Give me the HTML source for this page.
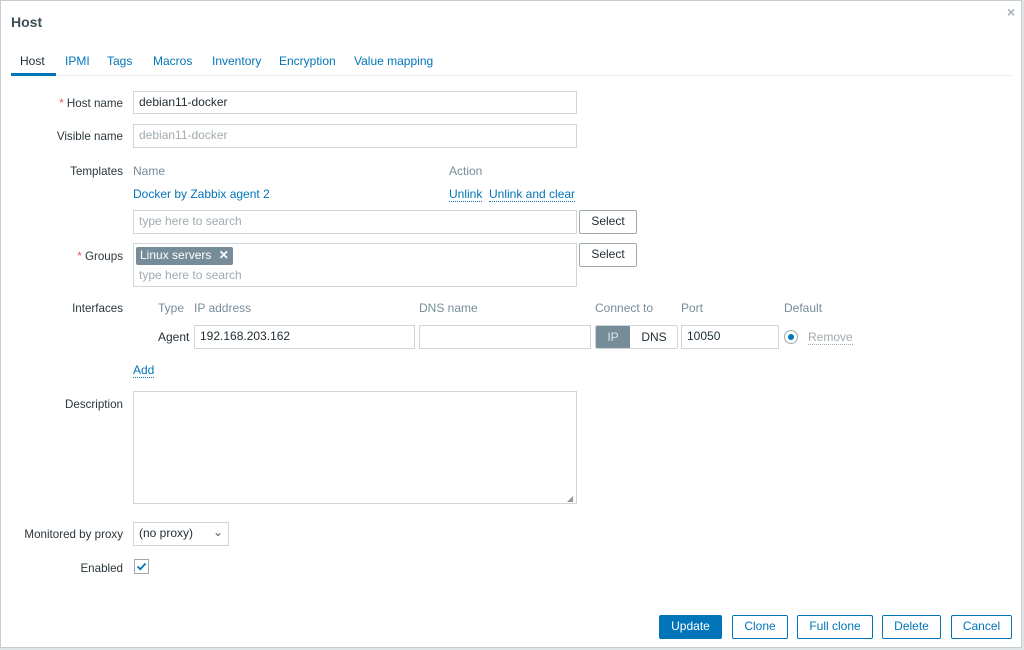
<!DOCTYPE html>
<html><head><meta charset="utf-8"><style>
*{box-sizing:border-box;margin:0;padding:0}
body{width:1024px;height:650px;background:#dfe4e7;font-family:"Liberation Sans",Arial,sans-serif;font-size:12px;color:#1f2c33;position:relative;overflow:hidden}
.dlg{position:absolute;left:0;top:0;width:1022px;height:648px;background:#fff;border:1px solid #c4ccd1}
.a{position:absolute;white-space:nowrap}
.lbl{position:absolute;right:898px;text-align:right;white-space:nowrap;font-size:11.6px;color:#2a363d;margin-top:1px}
.in{position:absolute;border:1px solid #cfd5d8;background:#fff;padding-left:5px;line-height:20px;white-space:nowrap}
.ph{color:#a1abb0}
.lnk{color:#0275b8}
.ul{border-bottom:1px dotted #0275b8}
.btn{position:absolute;border:1px solid #0275b8;color:#0275b8;background:#fff;text-align:center;line-height:20px;border-radius:2px}
.sel{position:absolute;border:1px solid #9faab0;background:#fff;text-align:center;line-height:21px;border-radius:2px}
.hd{color:#768d99}
</style></head><body>
<div class="dlg">
<div class="a" style="left:10px;top:13px;font-size:14px;font-weight:bold;color:#3e4e57">Host</div>
<div class="a" style="left:1006px;top:3px;color:#a5b0b6;font-size:14px;font-weight:bold">×</div>
<div class="a" style="left:10px;top:74px;width:1001px;height:1px;background:#ebeef0"></div>
<div class="a" style="left:10px;top:72px;width:45px;height:3px;background:#0275b8"></div>
<div class="a" style="left:19px;top:53px">Host</div>
<div class="a lnk" style="left:64px;top:53px">IPMI</div>
<div class="a lnk" style="left:106px;top:53px">Tags</div>
<div class="a lnk" style="left:152px;top:53px">Macros</div>
<div class="a lnk" style="left:211px;top:53px">Inventory</div>
<div class="a lnk" style="left:278px;top:53px">Encryption</div>
<div class="a lnk" style="left:353px;top:53px">Value mapping</div>

<div class="lbl" style="top:95px"><span style="color:#e45959">*</span> Host name</div>
<div class="in" style="left:132px;top:90px;width:444px;height:23px">debian11-docker</div>
<div class="lbl" style="top:128px">Visible name</div>
<div class="in ph" style="left:132px;top:123px;width:444px;height:24px">debian11-docker</div>

<div class="lbl" style="top:163px">Templates</div>
<div class="a hd" style="left:132px;top:163px">Name</div>
<div class="a hd" style="left:448px;top:163px">Action</div>
<div class="a lnk" style="left:132px;top:186px">Docker by Zabbix agent 2</div>
<div class="a lnk ul" style="left:448px;top:186px;line-height:14px">Unlink</div>
<div class="a lnk ul" style="left:488px;top:186px;line-height:14px">Unlink and clear</div>
<div class="in ph" style="left:132px;top:209px;width:444px;height:24px">type here to search</div>
<div class="sel" style="left:578px;top:209px;width:58px;height:24px">Select</div>

<div class="lbl" style="top:248px"><span style="color:#e45959">*</span> Groups</div>
<div class="in" style="left:132px;top:242px;width:444px;height:44px"></div>
<div class="a" style="left:135px;top:246px;width:97px;height:18px;background:#768d99;color:#fff;padding-left:4px;line-height:17px;border-radius:2px">Linux servers <b style="margin-left:4px">✕</b></div>
<div class="a ph" style="left:138px;top:267px">type here to search</div>
<div class="sel" style="left:578px;top:242px;width:58px;height:24px">Select</div>

<div class="lbl" style="top:300px">Interfaces</div>
<div class="a hd" style="left:157px;top:300px">Type</div>
<div class="a hd" style="left:193px;top:300px">IP address</div>
<div class="a hd" style="left:418px;top:300px">DNS name</div>
<div class="a hd" style="left:594px;top:300px">Connect to</div>
<div class="a hd" style="left:680px;top:300px">Port</div>
<div class="a hd" style="left:783px;top:300px">Default</div>
<div class="a" style="left:157px;top:329px">Agent</div>
<div class="in" style="left:193px;top:324px;width:221px;height:24px">192.168.203.162</div>
<div class="in" style="left:418px;top:324px;width:172px;height:24px"></div>
<div class="a" style="left:594px;top:324px;width:83px;height:24px;border:1px solid #cfd5d8;border-radius:2px;overflow:hidden">
<div class="a" style="left:0;top:0;width:34px;height:22px;background:#768d99;color:#dde3e6;text-align:center;line-height:22px">IP</div>
<div class="a" style="left:34px;top:0;width:48px;height:22px;text-align:center;line-height:22px">DNS</div></div>
<div class="in" style="left:680px;top:324px;width:98px;height:24px">10050</div>
<div class="a" style="left:783px;top:329px;width:14px;height:14px;border:1px solid #9faab0;border-radius:50%"><div class="a" style="left:3px;top:3px;width:6px;height:6px;border-radius:50%;background:#0275b8"></div></div>
<div class="a" style="left:807px;top:329px;color:#a1abb0;border-bottom:1px dotted #a1abb0;line-height:14px">Remove</div>
<div class="a lnk ul" style="left:132px;top:362px;line-height:14px">Add</div>

<div class="lbl" style="top:396px">Description</div>
<div class="in" style="left:132px;top:390px;width:444px;height:113px"></div>
<div class="a" style="left:566px;top:493px;color:#999;font-size:8px">◢</div>

<div class="lbl" style="top:526px">Monitored by proxy</div>
<div class="in" style="left:132px;top:521px;width:96px;height:24px">(no proxy)<span class="a" style="left:79px;top:-1px;color:#555">⌄</span></div>
<div class="lbl" style="top:560px">Enabled</div>
<div class="a" style="left:133px;top:558px;width:15px;height:15px;border:1px solid #9faab0;background:#fff"><svg width="13" height="13" style="position:absolute;left:0;top:0"><path d="M2.5 6.5 L5.3 9.2 L10.5 3.5" stroke="#0275b8" stroke-width="1.8" fill="none"/></svg></div>

<div class="btn" style="left:658px;top:614px;width:63px;height:24px;background:#0275b8;color:#fff">Update</div>
<div class="btn" style="left:731px;top:614px;width:56px;height:24px">Clone</div>
<div class="btn" style="left:796px;top:614px;width:76px;height:24px">Full clone</div>
<div class="btn" style="left:881px;top:614px;width:59px;height:24px">Delete</div>
<div class="btn" style="left:950px;top:614px;width:61px;height:24px">Cancel</div>
</div>
</body></html>
